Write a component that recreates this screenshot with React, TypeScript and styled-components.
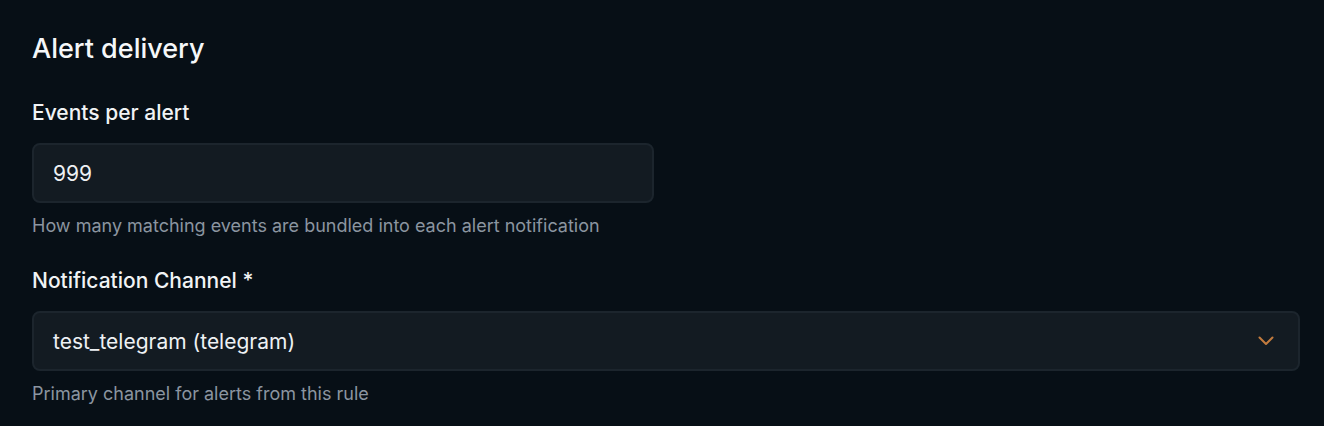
import { createGlobalStyle, styled } from "styled-components";

const GlobalStyle = createGlobalStyle`
  html, body {
    margin: 0;
    background: #070f16;
  }
  body {
    font-family: Inter, "Noto Sans", sans-serif;
    color: #f3f5f7;
  }
`;

const Section = styled.section`
  display: flex;
  flex-direction: column;
  padding: 33px 24px 0 32px;
  height: 426px;
  box-sizing: border-box;
`;

const Title = styled.h2`
  margin: 0 0 34px;
  font-size: 27px;
  line-height: 32px;
  font-weight: 500;
  color: #f5f7f9;
`;

const Field = styled.div`
  display: flex;
  flex-direction: column;
  margin-bottom: 29px;
`;

const Label = styled.label`
  font-size: 21px;
  line-height: 28px;
  font-weight: 500;
  color: #f1f3f5;
  margin-bottom: 16px;
`;

const Control = styled.div<{ $width?: string }>`
  display: flex;
  align-items: center;
  justify-content: space-between;
  box-sizing: border-box;
  width: ${(p) => p.$width ?? "100%"};
  height: 60px;
  padding: 0 24px 0 19px;
  background: #131b22;
  border: 2px solid #1c252d;
  border-radius: 8px;
  font-size: 21px;
  color: #eef1f4;
`;

const Help = styled.p`
  margin: 11px 0 0;
  font-size: 18px;
  line-height: 24px;
  color: #8b95a0;
`;

const Chevron = () => (
  <svg width="16" height="10" viewBox="0 0 16 10" fill="none" stroke="#c27b3e" strokeWidth="2" strokeLinecap="round" strokeLinejoin="round">
    <path d="M1.5 1.5 8 8l6.5-6.5" />
  </svg>
);

export default function App() {
  return (
    <>
      <GlobalStyle />
      <Section>
        <Title>Alert delivery</Title>
        <Field>
          <Label>Events per alert</Label>
          <Control $width="622px">999</Control>
          <Help>How many matching events are bundled into each alert notification</Help>
        </Field>
        <Field>
          <Label>Notification Channel *</Label>
          <Control>
            <span>test_telegram (telegram)</span>
            <Chevron />
          </Control>
          <Help>Primary channel for alerts from this rule</Help>
        </Field>
      </Section>
    </>
  );
}
